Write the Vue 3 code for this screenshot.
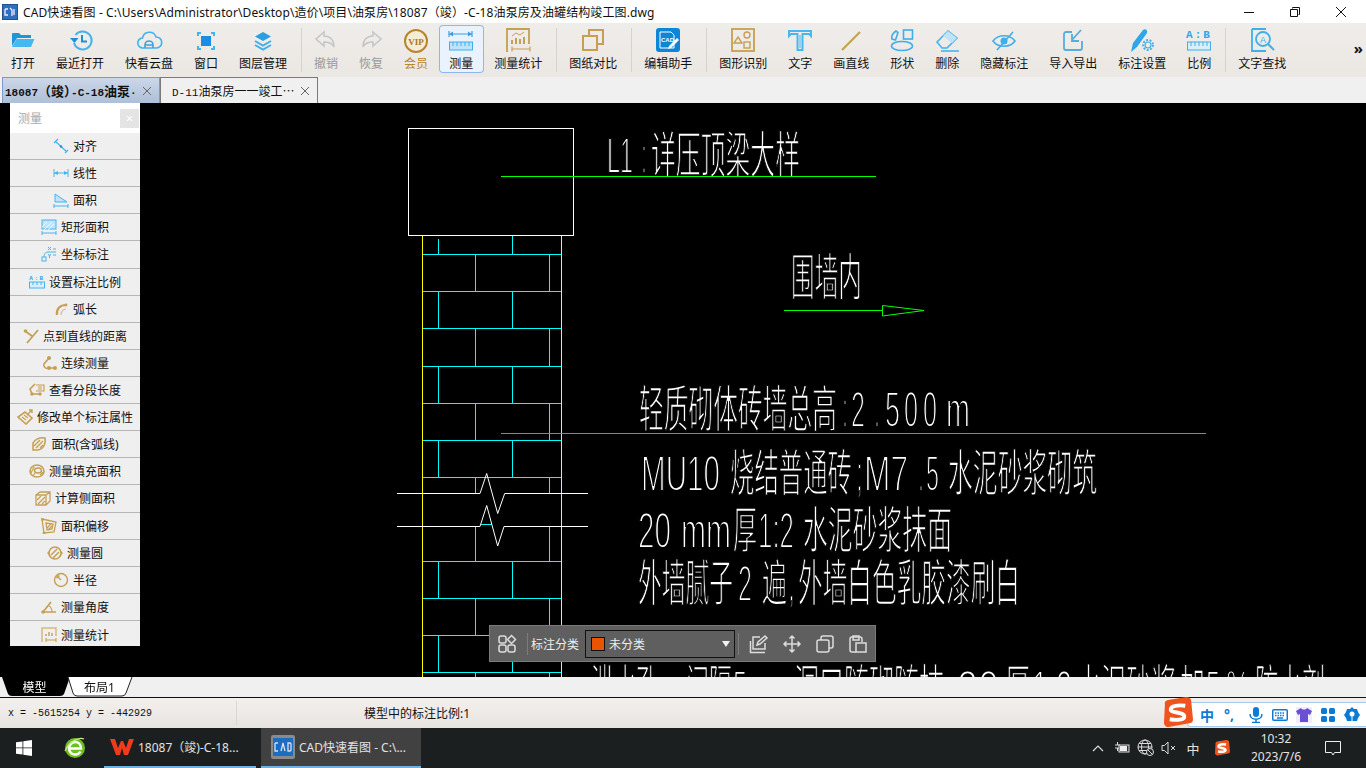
<script setup>
const B = '#3db0ea'
const G = '#c6a052'
const line = (c, w = 1.6) => `fill="none" stroke="${c}" stroke-width="${w}"`

// toolbar icons, 26x26 box
const icons = {
  open: `<path d="M2 7a1 1 0 0 1 1-1h6l2 2h10v3H7L2 19z" fill="#1f96dc"/><path d="M6.5 12H24.500l-3.500 8H2z" fill="#46b8f1"/>`,
  recent: `<path d="M8.500 8a9 9 0 1 1-1.500 8" ${line('#45b4ee', 2)}/><path d="M3 11l4.500 5 4-5z" fill="#1f8fd8"/><path d="M15 8v6.500h5" ${line('#1f8fd8', 2)}/>`,
  cloud: `<path d="M7 21a5 5 0 0 1-.5-10 7 7 0 0 1 13.500-1 5.500 5.500 0 0 1 .5 11z" ${line('#3fb4ee')}/><path d="M9 21v-3a4 4 0 0 1 8 0v3M9 18h8" ${line('#3fa0d8')}/>`,
  window: `<path d="M5 9V6h3M18 6h3v3M21 19v3h-3M8 22H5v-3" ${line('#45b4ee', 2)}/><rect x="8" y="9" width="10" height="10" fill="#1c8de0"/>`,
  layers: `<path d="M13 5l8 4.500-8 4.500-8-4.500z" fill="#2a9fe2"/><path d="M5 14l8 4.500 8-4.500" ${line('#3fb0ea', 2)}/><path d="M5 18l8 4.500 8-4.500" ${line('#3fb0ea', 2)}/>`,
  undo: `<path d="M11 5L3 12l8 7v-4c5 0 8 1 10 5 0-7-4-11-10-11z" ${line('#c6c6c6')}/>`,
  redo: `<path d="M15 5l8 7-8 7v-4c-5 0-8 1-10 5 0-7 4-11 10-11z" ${line('#c6c6c6')}/>`,
  vip: `<circle cx="13" cy="14" r="11" fill="#f5ecd6" stroke="#b5862e" stroke-width="2"/><text x="13" y="17.500" text-anchor="middle" font-size="9" font-weight="700" font-family="Liberation Serif" fill="#a87a20">VIP</text>`,
  measure: `<path d="M1 7h23M1 4v6M24 4v6" ${line('#3a9fe0', 1.2)}/><path d="M20 4.500l4 2.500-4 2.500zM5 4.500L1 7l4 2.500z" fill="#3a9fe0"/><rect x="1.500" y="15" width="23" height="8" fill="#bfe3fa" stroke="#3db0ea"/><path d="M5 15v4M9 15v4M13 15v4M17 15v4M21 15v4" ${line('#3db0ea', 1)}/>`,
  stat: `<path d="M2 25V2h22v15" ${line(G, 1.800)}/><path d="M7 17v-4M11 17v-6M15 17v-5M19 17v-7" ${line(G, 2)}/><path d="M7 9l4-3 4 2 4-3" ${line(G, 1)}/><path d="M7 22h18M7 19.500v5M25 19.500v5" ${line(G, 1.200)}/>`,
  compare: `<path d="M9 9V3h14v14h-6" ${line(G, 2)}/><rect x="3" y="9" width="14" height="14" ${line(G, 2)}/>`,
  edit: `<rect x="1" y="1" width="24" height="24" rx="3" fill="#0e86d8"/><path d="M5 5h11l3 3v13H5z" fill="#0e86d8" stroke="#fff"/><text x="6" y="15" font-size="6" font-weight="700" font-family="Liberation Sans" fill="#fff">CAD</text><path d="M14 19l8-8 2 2-8 8-3 1z" fill="#fff"/>`,
  shape: `<rect x="2" y="2" width="22" height="22" ${line(G, 1.800)}/><circle cx="17" cy="8" r="3" ${line(G, 1.400)}/><path d="M8 10l4 6H4z" ${line(G, 1.400)}/><rect x="14" y="15" width="6" height="6" ${line(G, 1.400)}/>`,
  text: `<path d="M2 4h22v5l-2-2h-6.500v16h-5V7H4L2 9z" ${line('#45b8f0', 2)}/><path d="M13 8v13" ${line('#45b8f0', 1)}/>`,
  draw: `<path d="M4 23L22 5" ${line(G, 2.200)}/>`,
  form: `<rect x="14.500" y="3" width="9" height="9" ${line('#3db0ea')}/><ellipse cx="13" cy="19" rx="10.500" ry="4.500" ${line('#3db0ea')}/><path d="M3 12c-1-3 1-6 4-8l2 1.500-2.500 7.500z" ${line('#3db0ea')}/>`,
  erase: `<path d="M3 15L14 4l9 7-10 10H8z" ${line('#45b4ee')}/><path d="M9 9l9 7 5-5-9-7z" fill="#bfe3fa"/><path d="M7 24h18" ${line('#45b4ee')}/>`,
  eye: `<path d="M2 14c5-7 17-7 22 0-5 7-17 7-22 0z" ${line('#3db0ea')}/><circle cx="13" cy="14" r="3.500" fill="#3db0ea"/><path d="M6 23L22 5" ${line('#3db0ea')}/>`,
  transfer: `<path d="M12 5H6a2 2 0 0 0-2 2v14a2 2 0 0 0 2 2h14a2 2 0 0 0 2-2v-7" ${line('#55aede', 1.800)}/><path d="M21 3L12 13M12 7v7h7" ${line('#55aede', 1.800)}/>`,
  setting: `<path d="M2 25l2-9L14 3c2-2 5 0 4 3L8 20z" fill="#2ea6e8"/><circle cx="19" cy="18" r="3" ${line('#3db0ea', 1.200)}/><circle cx="19" cy="18" r="5" ${line('#3db0ea', 1.800)} stroke-dasharray="2 1.500"/>`,
  ratio: `<text x="13" y="11" text-anchor="middle" font-size="11" font-weight="700" letter-spacing="2" font-family="Liberation Mono" fill="#2ea6e8">A:B</text><rect x="1.500" y="15" width="23" height="8" fill="#d8effb" stroke="#3db0ea"/><path d="M5 15v4M9 15v4M13 15v4M17 15v4M21 15v4" ${line('#3db0ea', 1)}/>`,
  find: `<path d="M3 2h14M3 2v22h14" ${line('#3db0ea', 1.800)}/><circle cx="14" cy="12" r="7" ${line('#3db0ea', 1.800)}/><path d="M19 17l6 6" ${line('#3db0ea', 2)}/><text x="14" y="15.500" text-anchor="middle" font-size="9" font-family="Liberation Sans" fill="#3db0ea">A</text>`
}

const tools = [
  { label: '打开', icon: icons.open }, { label: '最近打开', icon: icons.recent },
  { label: '快看云盘', icon: icons.cloud }, { label: '窗口', icon: icons.window },
  { label: '图层管理', icon: icons.layers }, { sep: true },
  { label: '撤销', icon: icons.undo, off: true }, { label: '恢复', icon: icons.redo, off: true },
  { label: '会员', icon: icons.vip, vip: true }, { label: '测量', icon: icons.measure, on: true },
  { label: '测量统计', icon: icons.stat }, { sep: true },
  { label: '图纸对比', icon: icons.compare }, { sep: true },
  { label: '编辑助手', icon: icons.edit }, { sep: true },
  { label: '图形识别', icon: icons.shape }, { label: '文字', icon: icons.text },
  { label: '画直线', icon: icons.draw }, { label: '形状', icon: icons.form },
  { label: '删除', icon: icons.erase }, { label: '隐藏标注', icon: icons.eye },
  { label: '导入导出', icon: icons.transfer }, { label: '标注设置', icon: icons.setting },
  { label: '比例', icon: icons.ratio }, { sep: true },
  { label: '文字查找', icon: icons.find }
]

// side panel icons, 16x16 box
const hatch = 'M1 8l5-5M3 11l8-8M7 11l6-6'
const rows = [
  ['对齐', `<path d="M2 3l12 11M5 1L1 5M15 12l-3 3" ${line('#45b4ee', 1.200)}/><circle cx="8" cy="8.500" r="1.200" fill="#1f8fd8"/>`],
  ['线性', `<path d="M1 8h14M1 4v8M15 4v8" ${line('#45b4ee', 1)}/><path d="M5 6l-4 2 4 2zM11 6l4 2-4 2z" fill="#45b4ee"/>`],
  ['面积', `<path d="M2 10V2l12 8z" fill="#bfe3fa" stroke="#45b4ee"/><path d="M1 14h14M1 12v4M15 12v4" ${line('#45b4ee', 1)}/>`],
  ['矩形面积', `<rect x="1" y="1" width="14" height="9" fill="#bfe3fa" stroke="#45b4ee"/><path d="${hatch}" ${line('#fff', .8)}/><path d="M1 14h14M1 12v4M15 12v4" ${line('#45b4ee', 1)}/>`],
  ['坐标标注', `<rect x="1" y="11" width="4" height="4" ${line('#45b4ee', 1)}/><path d="M3 11c0-4 2-5 5-5h7" ${line('#45b4ee', 1)}/><path d="M7 1l3 3M10 1L7 4M12 3h3M7 8l1.500 2 1.500-2M8.500 10v2M12 9h3" ${line('#5fa8d8', 1)}/>`],
  ['设置标注比例', `<text x="8" y="6" text-anchor="middle" font-size="6" font-weight="700" letter-spacing="1.500" font-family="Liberation Mono" fill="#2ea6e8">A:B</text><rect x=".5" y="8" width="15" height="6" fill="#d8effb" stroke="#45b4ee"/><path d="M4 8v3M8 8v3M12 8v3" ${line('#45b4ee', 1)}/>`],
  ['弧长', `<path d="M4 14c-1-6 3-10 9-10" ${line(G, 2.200)}/><path d="M8 14c0-3 2-6 5-6" ${line('#d9bf88', 1.200)}/><circle cx="13" cy="4" r="1.400" fill="${G}"/>`],
  ['点到直线的距离', `<path d="M2 3l7 5M15 2L4 15" ${line(G, 1.800)}/><circle cx="2.500" cy="3" r="1.800" fill="${G}"/>`],
  ['连续测量', `<path d="M8 3L3 9c-1 3 2 5 4 4h6" ${line(G, 1.600)}/><circle cx="8" cy="3" r="2" fill="${G}"/><circle cx="8" cy="13" r="2" fill="${G}"/><circle cx="14" cy="13" r="2" fill="${G}"/>`],
  ['查看分段长度', `<path d="M6 2L1 7l2 5h9" ${line(G, 1.600)}/><path d="M7 3h8v6H7M9 5h4M9 7h4" ${line(G, 1.200)}/><circle cx="3" cy="12" r="1.700" fill="${G}"/><circle cx="11" cy="12" r="1.700" fill="${G}"/>`],
  ['修改单个标注属性', `<path d="M8 3l7 6-6 6-8-7z" ${line(G, 1.600)}/><path d="M5 8l4 3M7 6l4 3" ${line(G, 1.200)}/><path d="M10 6l5-5M12 1h3v3" ${line(G, 1.400)}/>`],
  ['面积(含弧线)', `<path d="M2 14V7c2-4 7-6 12-5 1 5-1 11-7 12z" ${line(G, 1.600)}/><path d="M3 10l6-6M5 12l7-7M9 12l3-3" ${line(G, 1.400)}/>`],
  ['测量填充面积', `<ellipse cx="8" cy="8" rx="7" ry="6" ${line(G, 1.600)}/><ellipse cx="9" cy="7.500" rx="3.500" ry="2.500" ${line(G, 1.400)}/><path d="M2 10l3-6M4 13l2-3M11 12l3-3" ${line(G, 1.200)}/>`],
  ['计算侧面积', `<path d="M1 5l4-3h10v9l-4 4H1zM1 5h10v10M11 5l4-3" ${line(G, 1.300)}/><path d="M2 10l4-4M3 14l7-7M7 14l3-3" ${line(G, 1.300)}/>`],
  ['面积偏移', `<path d="M1 1l14 3-2 10-10 1z" ${line(G, 1.300)}/><path d="M5 5l7 1-1 5-5 1z" ${line(G, 1.300)}/><path d="M6 10l4-4M7 12l4-4" ${line(G, 1.100)}/><circle cx="1.500" cy="1.500" r="1.400" fill="${G}"/><circle cx="3" cy="15" r="1.400" fill="${G}"/>`],
  ['测量圆', `<circle cx="8" cy="8" r="6" ${line(G, 1.600)}/><path d="M4 10l6-6M6 13l6-6" ${line(G, 1.500)}/><path d="M2 6v4L0 8zM14 6v4l2-2z" fill="${G}"/>`],
  ['半径', `<circle cx="8" cy="8" r="6.500" ${line(G, 1.400)}/><path d="M8 8L4 4M4 6.500V4h2.500" ${line(G, 1.300)}/>`],
  ['测量角度', `<path d="M2 13L10 3M2 13h13" ${line(G, 1.700)}/><path d="M8 7c2 1 3 3 3 6" ${line(G, 1.100)}/><circle cx="2" cy="13" r="1.800" fill="${G}"/>`],
  ['测量统计', `<path d="M1 15V1h14v8" ${line('#d8bb78', 1.500)}/><path d="M5 9V7M8 9V5M11 9V6" ${line(G, 1.400)}/><path d="M5 13h10M5 11v4M15 11v4" ${line(G, 1.100)}/>`]
]

// brick courses: [top, bottom, x of joints]
const odd = [438.5, 512.5]
const even = [475.5, 549.5]
const courses = [
  [254, 291, even], [291, 328, odd], [328, 366, even], [366, 403, odd],
  [403, 440, even], [440, 477, odd], [477, 493, even], [526, 561, even],
  [561, 598, odd], [598, 635, even], [635, 672, odd], [672, 677, even]
]
const joints = [{ x: 438.5, y1: 239, y2: 254 }, { x: 512.5, y1: 235, y2: 254 }]
courses.forEach(([y1, y2, xs]) => xs.forEach(x => joints.push({ x, y1, y2 })))
const beds = [254, 291, 328, 366, 403, 440, 477, 561, 598, 635, 672]

const seg = (y, parts) => parts.map(p => ({
  t: p[0], x: p[1], y, len: p[2] * 2, cjk: /[\u4e00-\u9fff]/.test(p[0])
}))
const cadText = [
  ...seg(173, [['L1', 607, 26], [':', 642, 4], ['详压顶梁大样', 651, 149]]),
  ...seg(295, [['围墙内', 791, 71]]),
  ...seg(427, [['轻质砌体砖墙总高', 639, 198], [':', 843, 4], ['2', 851, 14], ['.', 875, 4], ['5', 885, 15], ['0', 904, 14], ['0', 923, 14], ['m', 946, 24]]),
  ...seg(491, [['MU10', 641, 79], ['烧结普通砖', 730, 122], [';', 857, 5], ['M7', 864, 44], ['.', 919, 4], ['5', 926, 13], ['水泥砂浆砌筑', 948, 149]]),
  ...seg(548, [['20', 638, 33], ['mm', 681, 50], ['厚', 733, 24], ['1:2', 758, 36], ['水泥砂浆抹面', 803, 149]]),
  ...seg(601, [['外墙腻子', 638, 95], ['2', 738, 14], ['遍', 762, 25], [',', 789, 5], ['外墙白色乳胶漆刷白', 798, 222]]),
  ...seg(706, [['泄水孔', 591, 68], ['间隔', 686, 46], ['5', 733, 14], ['m', 755, 24], ['洞口随砌随抹', 794, 150], ['20', 957, 42], ['厚', 1005, 25], ['1:2', 1032, 40], ['水泥砂浆', 1076, 100], ['加', 1180, 25], ['5', 1206, 14], ['%', 1226, 24], ['防水剂', 1255, 70]])
]
</script>

<template>
  <div class="app">
    <!-- Title -->
    <div class="titlebar">
      <svg class="app-icon" viewBox="0 0 16 16">
        <rect width="16" height="16" fill="#27508f"/>
        <rect x="1" y="1" width="14" height="14" fill="#2f6fc0"/>
        <path d="M3 5h3M3 5v6h3M8 4l2 2v6M12 5v6" fill="none" stroke="#eef" stroke-width="1.300"/>
      </svg>
      <span class="title-text">CAD快速看图 - C:\Users\Administrator\Desktop\造价\项目\油泵房\18087（竣）-C-18油泵房及油罐结构竣工图.dwg</span>
      <div class="win-btns">
        <div class="win-btn"><svg width="12" height="12"><path d="M1 6.500h10" stroke="#111"/></svg></div>
        <div class="win-btn"><svg width="12" height="12"><path d="M3.500 2.500v-1h7v7h-1M1.500 3.500h7v7h-7z" fill="none" stroke="#111"/></svg></div>
        <div class="win-btn"><svg width="12" height="12"><path d="M1 1l10 10M11 1L1 11" stroke="#111"/></svg></div>
      </div>
    </div>

    <!-- Toolbar -->
    <div class="toolbar">
      <template v-for="(t, i) in tools" :key="i">
        <div v-if="t.sep" class="tool-sep"></div>
        <div v-else class="tool" :class="{ on: t.on, off: t.off, vip: t.vip }">
          <svg class="tool-icon" viewBox="0 0 26 26" v-html="t.icon"></svg>
          <span>{{ t.label }}</span>
        </div>
      </template>
      <div class="more">»</div>
    </div>

    <!-- File tabs -->
    <div class="tabs">
      <div class="tab active">
        <span class="tab-name">18087<i>（竣<b>）</b></i>-C-18<i>油泵</i>·</span>
        <svg class="tab-x" width="10" height="10"><path d="M1 1l8 8M9 1L1 9" stroke="#666"/></svg>
      </div>
      <div class="tab">
        <span class="tab-name second">D-11<i>油泵房一一竣工…</i></span>
        <svg class="tab-x" width="10" height="10"><path d="M1 1l8 8M9 1L1 9" stroke="#666"/></svg>
      </div>
    </div>

    <!-- Drawing -->
    <div class="canvas">
      <svg class="drawing" viewBox="0 103 1366 574" width="1366" height="574">
        <text
          v-for="(c, i) in cadText"
          :key="i"
          class="cad-text"
          :class="{ cjk: c.cjk }"
          :transform="`translate(${c.x} ${c.y}) scale(.5 1)`"
          :textLength="c.len"
          lengthAdjust="spacingAndGlyphs"
        >{{ c.t }}</text>

        <g shape-rendering="crispEdges" fill="none">
          <path d="M422.500 235V677M561.500 235V677" stroke="#ffff00"/>
          <path v-for="y in beds" :key="y" :d="`M423 ${y + .5}H561`" stroke="#00ffff"/>
          <path v-for="(j, i) in joints" :key="i" :d="`M${j.x} ${j.y1}V${j.y2}`" stroke="#00ffff"/>
          <path d="M481 524.500H492" stroke="#00ffff"/>
          <rect x="408.500" y="128.500" width="165" height="107" stroke="#fff" fill="#000"/>
          <path d="M501 176.500H876" stroke="#00ff00"/>
          <path d="M784 310.500H882" stroke="#00ff00"/>
          <path d="M501 433.500H1206" stroke="#1fd01f"/>
        </g>
        <path d="M882.500 305.500V316L924 310.500z" fill="none" stroke="#00ff00"/>
        <path d="M397 493.500H480L486.700 473.500 497.700 513.500 504.700 493.500H588" fill="none" stroke="#fff"/>
        <path d="M397 526.500H480L486.700 505.500 497.700 546 504 526.500H588" fill="none" stroke="#fff"/>
      </svg>

      <!-- Measure panel -->
      <div class="panel">
        <div class="panel-head">
          <span>测量</span>
          <div class="panel-close">×</div>
        </div>
        <div v-for="r in rows" :key="r[0]" class="panel-row">
          <svg class="row-icon" viewBox="0 0 16 16" v-html="r[1]"></svg>
          <span>{{ r[0] }}</span>
        </div>
      </div>

      <!-- Annotation bar -->
      <div class="floatbar">
        <svg class="fb-icon first" viewBox="0 0 20 20" fill="none" stroke="#ddd" stroke-width="1.500">
          <rect x="2" y="2" width="7" height="7" rx="2"/>
          <path d="M14.500 1.500l4 4-4 4-4-4z"/>
          <rect x="2" y="11" width="7" height="7" rx="2"/>
          <rect x="11" y="11" width="7" height="7" rx="2"/>
        </svg>
        <div class="fb-sep"></div>
        <span class="fb-label">标注分类</span>
        <div class="fb-select">
          <span class="swatch"></span>
          <span>未分类</span>
          <span class="caret"></span>
        </div>
        <div class="fb-sep narrow"></div>
        <svg class="fb-icon" viewBox="0 0 20 20" fill="none" stroke="#ddd" stroke-width="1.500">
          <path d="M11 3H4v12h12V9"/>
          <path d="M1.500 7v11.500H16"/>
          <path d="M8 11l1-3 7-6 2 2-7 6z"/>
        </svg>
        <svg class="fb-icon" viewBox="0 0 20 20" fill="none" stroke="#ddd" stroke-width="1.500">
          <path d="M10 2v16M2 10h16M7.500 4.500L10 2l2.500 2.500M7.500 15.500L10 18l2.500-2.500M4.500 7.500L2 10l2.500 2.500M15.500 7.500L18 10l-2.500 2.500"/>
        </svg>
        <svg class="fb-icon" viewBox="0 0 20 20" fill="none" stroke="#ddd" stroke-width="1.500">
          <rect x="2" y="6" width="12" height="12" rx="2"/>
          <path d="M6 6V4a2 2 0 0 1 2-2h8a2 2 0 0 1 2 2v8a2 2 0 0 1-2 2h-2"/>
        </svg>
        <svg class="fb-icon" viewBox="0 0 20 20" fill="none" stroke="#ddd" stroke-width="1.500">
          <path d="M8 18H4a2 2 0 0 1-2-2V5a2 2 0 0 1 2-2h8a2 2 0 0 1 2 2v3"/>
          <path d="M5 6V2h6v4z"/>
          <rect x="8" y="9" width="10" height="9"/>
        </svg>
      </div>
    </div>

    <!-- Sheet tabs -->
    <div class="sheets">
      <div class="sheet model">
        <svg class="sheet-bg" width="68" height="20"><path d="M0 0H68L62 17Q61 19 58 19H10Q7 19 6 17z" fill="#000"/></svg>
        <span>模型</span>
      </div>
      <div class="sheet">
        <svg class="sheet-bg" width="68" height="20"><path d="M1 0L6 16Q7 19 10 19H55Q58 19 59 16L65 0" fill="#fff" stroke="#222"/></svg>
        <span>布局1</span>
      </div>
    </div>

    <!-- Status -->
    <div class="status">
      <div class="st-cell coords">x = -5615254 y = -442929</div>
      <div class="st-cell scale">模型中的标注比例:1</div>
      <div class="ime">
        <svg class="ime-logo" viewBox="0 0 32 32">
          <path d="M3 8Q2 4 6 3L25 0Q29 0 30 3L32 23Q32 27 28 27L7 31Q3 31 2 27z" fill="#f0541e"/>
          <path d="M24 9C17 8 9 9 9 13c0 4 14 2 14 7 0 4-8 4-15 3" fill="none" stroke="#fff" stroke-width="4"/>
        </svg>
        <span class="ime-zh">中</span>
        <span class="ime-dot">°,</span>
        <svg class="ime-i" viewBox="0 0 16 16"><rect x="5" y="0" width="6" height="10" rx="3" fill="#0c7bd6"/><path d="M2 7c0 7 12 7 12 0M8 13v3M4 15.500h8" fill="none" stroke="#0c7bd6" stroke-width="1.500"/></svg>
        <svg class="ime-i" viewBox="0 0 16 16"><rect x=".75" y="2.750" width="14.500" height="10.500" rx="1" fill="none" stroke="#0c7bd6" stroke-width="1.500"/><path d="M3 6h10M3 8.500h10" stroke="#0c7bd6" stroke-dasharray="1.500 1" stroke-width="1.500"/><path d="M5 11h6" stroke="#0c7bd6" stroke-width="1.500"/></svg>
        <svg class="ime-i shirt" viewBox="0 0 16 16"><path d="M5 1L0 4l2 4 2-1v8h8V7l2 1 2-4-5-3c-1 2-5 2-6 0z" fill="#6a4fd0"/></svg>
        <svg class="ime-i" viewBox="0 0 16 16" fill="#0c7bd6"><rect x="1" y="1" width="6" height="6" rx="1.500"/><rect x="9" y="1" width="6" height="6" rx="1.500"/><rect x="1" y="9" width="6" height="6" rx="1.500"/><rect x="9" y="9" width="6" height="6" rx="1.500"/></svg>
        <svg class="ime-i" viewBox="0 0 16 16"><path d="M8 0l2 2 3 0 1 3 2 3-2 3-1 3H3l-1-3-2-3 2-3 1-3h3z" fill="#0c7bd6"/><circle cx="8" cy="7" r="2.500" fill="#fff"/><path d="M8 9v5" stroke="#fff"/></svg>
      </div>
    </div>

    <!-- Taskbar -->
    <div class="taskbar">
      <div class="start">
        <svg width="16" height="16" viewBox="0 0 16 16" fill="#fff"><path d="M0 2.300L6.500 1.400V7.500H0zM7.300 1.300L16 0V7.500H7.300zM0 8.300H6.500V14.500L0 13.700zM7.300 8.300H16V16L7.300 14.700z"/></svg>
      </div>
      <div class="pin">
        <svg width="24" height="24" viewBox="0 0 24 24">
          <circle cx="12" cy="12" r="10" fill="#6cc21d"/>
          <path d="M6 12.500h12C18 8 15 6 12 6s-6 3-6 6.500 3 6 6 6c2.500 0 4.500-1 5.500-3" fill="none" stroke="#fff" stroke-width="2.500"/>
          <path d="M21 3C17 1 7 4 2 15" fill="none" stroke="#c8e890" stroke-width="1.200"/>
        </svg>
      </div>
      <div class="task">
        <svg width="24" height="18" viewBox="0 0 24 18"><path d="M0 1h5l3 9 3-7h2l3 7 3-9h5l-6 16h-4l-2-7-2 7H6z" fill="#f03a1c"/></svg>
        <span>18087（竣)-C-18...</span>
      </div>
      <div class="task current">
        <svg class="cad-icon" width="24" height="24" viewBox="0 0 24 24">
          <rect width="24" height="24" rx="2" fill="#8a8a8a"/>
          <rect x="2" y="3" width="20" height="18" fill="#1c6cc0"/>
          <path d="M4 8H7M4 8v8h3M10 16l2-8 2 8M17 8v8h2a1 1 0 0 0 1-1V9a1 1 0 0 0-1-1z" fill="none" stroke="#dde" stroke-width="1.300"/>
        </svg>
        <span>CAD快速看图 - C:\...</span>
      </div>
      <div class="tray">
        <svg width="12" height="8" viewBox="0 0 12 8"><path d="M1 7l5-5 5 5" fill="none" stroke="#ddd" stroke-width="1.200"/></svg>
        <svg width="16" height="14" viewBox="0 0 16 14"><path d="M1 4h5M1 7h5M3.500 1v3M3.500 7v3" stroke="#ddd" fill="none"/><rect x="5" y="4" width="10" height="7" fill="#333" stroke="#ddd"/><rect x="6" y="5" width="7" height="5" fill="#eee"/></svg>
        <svg width="18" height="18" viewBox="0 0 18 18" fill="none" stroke="#ddd"><circle cx="8" cy="8" r="7"/><ellipse cx="8" cy="8" rx="3.500" ry="7"/><path d="M1 8h14M2 4.500h12M2 11.500h12"/><circle cx="13" cy="13" r="3.500" fill="#222"/><path d="M11 11l4 4"/></svg>
        <svg width="16" height="14" viewBox="0 0 16 14" fill="none" stroke="#ddd"><path d="M1 4.500h2.500L7 1v12L3.500 9.500H1z"/><path d="M10 5l4 4M14 5l-4 4"/></svg>
        <span class="tray-zh">中</span>
        <svg width="16" height="16" viewBox="0 0 32 32">
          <path d="M3 8Q2 4 6 3L25 0Q29 0 30 3L32 23Q32 27 28 27L7 31Q3 31 2 27z" fill="#f0541e"/>
          <path d="M24 9C17 8 9 9 9 13c0 4 14 2 14 7 0 4-8 4-15 3" fill="none" stroke="#fff" stroke-width="5"/>
        </svg>
        <div class="clock"><div>10:32</div><div>2023/7/6</div></div>
        <svg width="16" height="16" viewBox="0 0 16 16"><path d="M.5 1.500h15v11h-6L8 15l-1.500-2.500h-6z" fill="none" stroke="#eee"/></svg>
      </div>
    </div>
  </div>
</template>

<style scoped>
.app {
  width: 1366px;
  height: 768px;
  display: flex;
  flex-direction: column;
  overflow: hidden;
  font-family: "Noto Sans", "Noto Sans CJK SC", sans-serif;
  font-size: 12px;
  color: #111;
}

.titlebar {
  height: 23px;
  flex: none;
  display: flex;
  align-items: center;
  background: #fff;
}
.app-icon { width: 16px; height: 16px; margin: 0 5px 0 2px; }
.title-text { font-size: 12px; letter-spacing: .1px; white-space: nowrap; }
.win-btns { margin-left: auto; padding-right: 2px; display: flex; }
.win-btn { width: 46px; display: flex; justify-content: center; }

.toolbar {
  height: 54px;
  flex: none;
  box-sizing: border-box;
  padding: 2px 0 0 .5px;
  display: flex;
  align-items: flex-start;
  background: linear-gradient(#efedea, #ebe7e3);
}
.tool {
  height: 48px;
  box-sizing: border-box;
  padding: 2px 10.5px 0;
  display: flex;
  flex-direction: column;
  align-items: center;
  line-height: 16px;
  white-space: nowrap;
  border-radius: 4px;
}
.tool-icon { width: 26px; height: 26px; margin: 0 -5px 3px; flex: none; overflow: visible; }
.tool.on { background: #eaf3fd; box-shadow: inset 0 0 0 1px #8db8ee; }
.tool.off { color: #999; }
.tool.vip { color: #b8862c; }
.tool-sep { width: 1px; height: 44px; margin: 3px 2px 0 3px; background: #d6d3cf; }
.more { margin: 13px 3px 0 auto; font-size: 15px; font-weight: 700; line-height: 20px; }

.tabs {
  height: 26px;
  flex: none;
  box-sizing: border-box;
  padding-left: 2px;
  display: flex;
  background: #f0f0f0;
}
.tab {
  width: 158px;
  height: 26px;
  box-sizing: border-box;
  border: 1px solid #7a7a7a;
  border-bottom: 0;
  display: flex;
  align-items: center;
  overflow: hidden;
  font-family: "Liberation Mono", "Noto Sans CJK SC", monospace;
  font-size: 11px;
}
.tab i { font-style: normal; font-size: 13px; font-family: "Noto Sans CJK SC", sans-serif; }
.tab i b { margin-right: -6px; font-weight: inherit; }
.tab.active {
  border-color: #7c9ac8;
  background: linear-gradient(#ccd7e8, #aebfd9);
  font-weight: 700;
}
.tab-name { width: 134px; flex: none; padding-left: 2px; box-sizing: border-box; white-space: nowrap; overflow: hidden; }
.tab-name.second { padding-left: 11px; }
.tab-name.second i { font-size: 12px; }
.tab-x { flex: none; margin-left: 5px; }

.canvas { flex: 1; position: relative; background: #000; overflow: hidden; }
.drawing { position: absolute; left: 0; top: 0; display: block; will-change: transform; }
.cad-text {
  font-family: "Liberation Sans", sans-serif;
  font-size: 50px;
  fill: #fff;
  stroke: #000;
  stroke-width: 1.9px;
}
.cad-text.cjk {
  font-family: "Noto Sans CJK SC", sans-serif;
  stroke-width: 1.5px;
}

.panel { position: absolute; left: 10px; top: 0; width: 130px; height: 543px; overflow: hidden; background: #efefef; }
.panel-head {
  height: 30px;
  box-sizing: border-box;
  padding: 0 1px 0 8px;
  display: flex;
  align-items: center;
  justify-content: space-between;
  background: #fff;
  color: #aaa;
}
.panel-close {
  width: 19px;
  height: 19px;
  background: #e4e4e4;
  color: #fff;
  text-align: center;
  line-height: 19px;
  font-size: 13px;
}
.panel-row {
  height: 27.12px;
  box-sizing: border-box;
  border-bottom: 1px solid #b6b6b6;
  display: flex;
  align-items: center;
  justify-content: center;
  gap: 4px;
  white-space: nowrap;
}
.panel-row:last-child { border-bottom: 0; }
.row-icon { width: 16px; height: 16px; flex: none; }

.floatbar {
  position: absolute;
  left: 489px;
  top: 522px;
  width: 387px;
  height: 37px;
  box-sizing: border-box;
  border: 1px solid #7a7a7a;
  background: #5f5f5f;
  color: #eee;
  display: flex;
  align-items: center;
}
.fb-icon { width: 20px; height: 20px; margin-left: 13px; flex: none; }
.fb-icon.first { margin-left: 7px; }
.fb-sep { width: 1px; height: 22px; margin: 0 3px 0 10px; background: #7c7c7c; flex: none; }
.fb-sep.narrow { margin: 0 -3px 0 3px; }
.fb-label { width: 48px; flex: none; white-space: nowrap; }
.fb-select {
  width: 150px;
  height: 28px;
  box-sizing: border-box;
  margin-left: 6px;
  padding-left: 5px;
  border: 1px solid #111;
  display: flex;
  align-items: center;
  gap: 4px;
  flex: none;
}
.swatch { width: 14px; height: 14px; box-sizing: border-box; border: 1px solid #111; background: #e85400; }
.caret {
  margin-left: auto;
  margin-right: 4px;
  border-left: 4.5px solid transparent;
  border-right: 4.5px solid transparent;
  border-top: 6px solid #f2f2f2;
}

.sheets {
  height: 21px;
  flex: none;
  box-sizing: border-box;
  border-bottom: 1px solid #111;
  padding-left: 2px;
  display: flex;
  background: #f0f0f0;
}
.sheet {
  width: 65px;
  height: 20px;
  position: relative;
  display: flex;
  align-items: center;
  justify-content: center;
  box-sizing: border-box;
}
.sheet span { position: relative; }
.sheet.model { color: #fff; }
.sheet-bg { position: absolute; left: 0; top: 0; }

.status {
  height: 30px;
  flex: none;
  position: relative;
  display: flex;
  background: linear-gradient(#f2f0ee, #e8e4e0);
}
.st-cell { height: 24px; margin-top: 3px; display: flex; align-items: center; box-sizing: border-box; border-right: 1px solid #dad7d3; }
.coords { width: 237px; padding-left: 8px; font-family: "Liberation Mono", monospace; font-size: 10px; }
.scale { width: 300px; padding-left: 127px; border-right: 0; white-space: nowrap; }
.ime {
  position: absolute;
  right: 0;
  top: 4px;
  width: 179px;
  height: 25px;
  box-sizing: border-box;
  border: 1px solid #a9c9ee;
  border-right: 0;
  border-radius: 4px 0 0 4px;
  background: #fff;
  display: flex;
  align-items: center;
  padding-left: 12px;
  color: #0c7bd6;
}
.ime-logo { position: absolute; left: -26px; top: -6px; width: 31px; height: 31px; }
.ime-zh { width: 16px; font-size: 14px; font-weight: 700; }
.ime-dot { width: 16px; margin-left: 8px; font-size: 14px; font-weight: 700; line-height: 14px; }
.ime-i { width: 16px; height: 16px; margin-left: 8px; flex: none; }
.ime-i.shirt { background: #f0eefc; }

.taskbar {
  height: 40px;
  flex: none;
  display: flex;
  align-items: stretch;
  background: #1c1f1f;
  color: #e2e2e2;
}
.start { width: 48px; display: flex; align-items: center; justify-content: center; }
.pin { width: 56px; display: flex; align-items: center; padding-left: 15px; box-sizing: border-box; }
.task {
  width: 152px;
  box-sizing: border-box;
  padding-left: 6px;
  border-bottom: 2px solid #6db2e0;
  display: flex;
  align-items: center;
  gap: 4px;
  white-space: nowrap;
}
.task.current { width: 160px; margin-left: 5px; padding-left: 10px; background: #414141; }
.tray {
  position: absolute;
  left: 1086px;
  display: grid;
  grid-template-columns: 24px 24px 24px 22px 26px 32px 76px 38px;
  justify-items: center;
  align-items: center;
  height: 40px;
}
.tray-zh { font-size: 13px; }
.clock { text-align: center; line-height: 18px; font-size: 12px; }
</style>

<style>
html, body { margin: 0; background: #000; }
</style>
